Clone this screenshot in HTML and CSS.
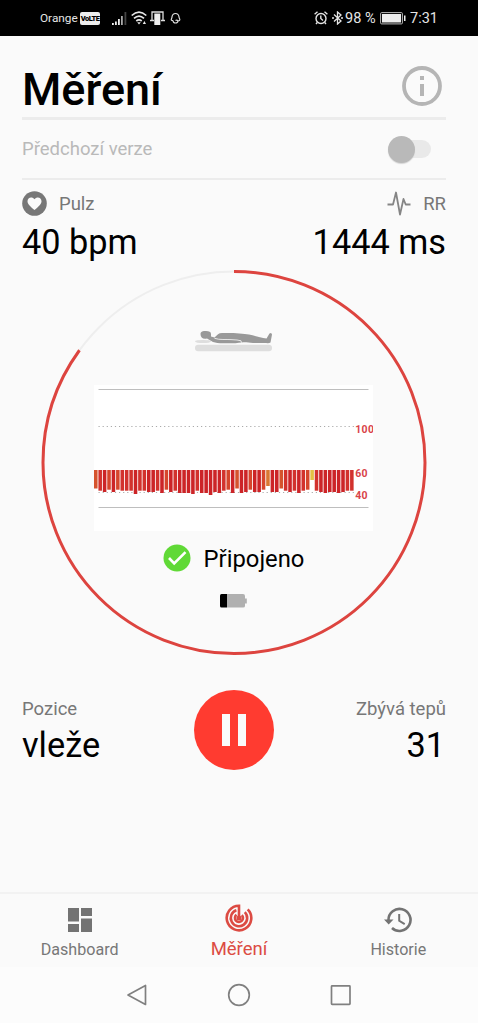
FILE: index.html
```html
<!DOCTYPE html>
<html lang="cs">
<head>
<meta charset="utf-8">
<title>Měření</title>
<link rel="stylesheet" href="styles.css">
</head>
<body>
<div class="statusbar">
  <span class="carrier">Orange</span>
  <span class="volte">VoLTE</span>
  <svg class="signal" width="15" height="13" viewBox="0 0 15 13"><path fill="#eee" d="M0 11h1.800v2H0zM3 9.500h1.800v3.500H3zM6 7h1.800v6H6z"/><path fill="#aaa" d="M9 4h1.800v9H9z"/><path fill="#444" d="M12.500 0h1.800v13h-1.800z"/></svg>
  <svg class="wifi" width="17" height="14" viewBox="0 0 17 14"><g fill="none" stroke="#e8e8e8" stroke-width="1.700"><path d="M.7 4.500Q8 -2.300 15.300 4.500M3 7.400Q8 2.800 13 7.400M5.300 10Q8 7.700 10.700 10"/></g><path fill="#e8e8e8" d="M6.200 11.200h3.600L8 13.500zM11.800 13l1.600-3 1.600 3z"/></svg>
  <svg class="cast" width="15" height="14" viewBox="0 0 15 14"><path d="M2 9V1h11v8M0 9.500h4M11 9.500h4" fill="none" stroke="#ddd" stroke-width="1.300"/><path fill="#eee" d="M4.300 2.500h6v11.500h-6z"/></svg>
  <svg class="bell" width="11" height="12" viewBox="0 0 11 12"><path d="M3 8.500Q.5 8.500 1.500 6.700Q2 6 2 4.800Q2.500 1.500 5.500 1.500T9 4.800Q9 6 9.700 7Q10.300 8.800 8 8.800M3 8.500q0 2.500 2.500 2.500T8 8.800Q7 7.500 5.500 8.500" fill="none" stroke="#ddd" stroke-width="1.200"/></svg>
  <span class="fill"></span>
  <svg class="alarm" width="14" height="14" viewBox="0 0 14 14"><g fill="none" stroke="#e5e5e5" stroke-width="1.400"><circle cx="7" cy="7.500" r="5"/><path d="M6.800 4.500v3l2.200 2M.6 3.200 3.500.8M13.400 3.200 10.500.8M3.300 11.500l-1.300 1.500M10.700 11.500l1.300 1.500"/></g></svg>
  <svg class="bt" width="11" height="14" viewBox="0 0 11 14"><path d="M2 3.500l7 6.500-3.500 3V1L9 4 2 10.500" fill="none" stroke="#e5e5e5" stroke-width="1.300"/><path d="M0 6.200h2v1.600H0zM9 6.200h2v1.600H9z" fill="#e5e5e5"/></svg>
  <span class="pct">98 %</span>
  <svg class="batt" width="26" height="13" viewBox="0 0 26 13"><rect x=".6" y=".6" width="21.800" height="11.300" rx="1" fill="none" stroke="#bbb"/><path fill="#eee" d="M2 2h19v8.500H2zM24 3.500h1.500v5.500H24z"/></svg>
  <span class="clock">7:31</span>
</div>

<main class="content">
  <header class="header">
    <h1 class="title">Měření</h1>
    <svg class="info" width="40" height="40" viewBox="0 0 40 40"><circle cx="20" cy="20" r="18" fill="none" stroke="#b5b5b5" stroke-width="3.800"/><path fill="#b5b5b5" d="M18 10h4v4h-4zM18 18h4v12h-4z"/></svg>
  </header>
  <div class="option">
    <span>Předchozí verze</span>
    <span class="switch"><span class="knob"></span></span>
  </div>

  <div class="metrics">
    <div class="metric">
      <div class="label"><svg width="25" height="25" viewBox="0 0 25 25"><circle cx="12.500" cy="12.500" r="12.300" fill="#777"/><path fill="#fafafa" d="M12.500 19C8 15 5.500 13 5.500 10.200c0-4 4.800-5 7-1.900 2.200-3.100 7-2.100 7 1.900 0 2.800-2.500 4.800-7 8.800z"/></svg><span>Pulz</span></div>
      <div class="value">40 bpm</div>
    </div>
    <div class="metric right">
      <div class="label"><svg width="24" height="25" viewBox="0 0 24 25"><path d="M.5 13.500H6L9 1.500l4 22 3.500-15.500 2.200 5.500h4.800" fill="none" stroke="#858585" stroke-width="1.800" stroke-linejoin="round"/></svg><span>RR</span></div>
      <div class="value">1444 ms</div>
    </div>
  </div>

  <section class="dial">
    <svg class="ring" width="386" height="386" viewBox="0 0 386 386"><circle class="track" cx="193" cy="192.500" r="191"/><circle class="progress" cx="193" cy="192.500" r="191" pathLength="100" stroke-dasharray="85 15" transform="rotate(-90 193 192.500)"/></svg>
    <div class="dial-body">
      <svg class="person" width="78" height="22" viewBox="0 0 78 22"><rect y="14.800" width="77" height="6.400" rx="3.200" fill="#dedede"/><ellipse cx="8" cy="11.500" rx="8" ry="1.600" fill="#dedede"/><path fill="#999" d="M5.500 4C5.500 1.500 8 1 11 1s5 .8 5 3v2.500l3.500 1L23 4.200Q24.500 3 27 3C36 2.600 48 3.300 54 4.500c6 1.300 11 3 17.500 4l3-5Q76.500 2 77 4.500L75.500 12.500Q74 13.500 71 13H58c-4 0-7-1-11-.6-6 .7-11 1.200-17 .8-5 .1-9-.1-12-1.200L12 8.500C8 9.200 5.500 8 5.500 4z"/><path d="M19.500 8.300C25 10.200 31 9.200 36 9.600q7 .2 10 1.200l.5 2" fill="none" stroke="#fafafa" stroke-width=".8"/></svg>
      <svg class="chart" id="chart" width="279" height="146" viewBox="0 0 279 146">
        <rect width="279" height="146" fill="#fff"/>
        <path d="M4.500 4.500h270M4.500 122.500h270" stroke="#bebebe" fill="none"/>
        <path d="M4.500 41.500h257M4.500 107.500h257" stroke="#aaa" stroke-dasharray="1.200 2.900" fill="none"/>
        <g id="bars"></g>
        <g class="axis"><text x="261.300" y="48">100</text><text x="261.300" y="91.500">60</text><text x="261.300" y="113.500">40</text></g>
      </svg>
      <div class="connection"><svg width="28" height="28" viewBox="0 0 28 28"><circle cx="14" cy="14" r="13.500" fill="#60d936"/><path d="M6 14l5.200 5.500L22.500 8.200" fill="none" stroke="#fff" stroke-width="2.600"/></svg><span>Připojeno</span></div>
      <svg class="sensor" width="27" height="14" viewBox="0 0 27 14"><path fill="#b0b0b0" d="M7 0h16q2 0 2 2v2.500h1.800v5H25V12q0 1.500-2 1.500H7z"/><path d="M7 0v13.500H1.500Q0 13.500 0 12V1.500Q0 0 1.500 0z"/></svg>
    </div>
  </section>

  <section class="controls">
    <div class="side"><div class="caption">Pozice</div><div class="value">vleže</div></div>
    <div class="pause"><span></span><span></span></div>
    <div class="side right"><div class="caption">Zbývá tepů</div><div class="value remaining">31</div></div>
  </section>
</main>

<nav class="tabs">
  <div class="tab"><svg width="26" height="26" viewBox="0 0 26 26"><path fill="#737373" d="M1 1h11v13.500H1zM14 1h11v8H14zM1 17h11v8H1zM14 11.500h11V25H14z"/></svg><span>Dashboard</span></div>
  <div class="tab active"><svg width="28" height="28" viewBox="0 0 28 28"><g fill="none" stroke="#dc4b43" stroke-width="2.600"><path d="M14 14V1.700a12.300 12.300 0 1 0 8.700 3.600"/><path d="M11.400 6.200a8.200 8.200 0 1 0 8.400 2"/><path d="M11.500 10.800a4 4 0 1 0 5.300.3"/></g><circle cx="14" cy="14" r="2.500" fill="#dc4b43"/></svg><span>Měření</span></div>
  <div class="tab"><svg width="28" height="26" viewBox="0 0 28 26"><path d="M4.500 13A11 11 0 1 1 8 21" fill="none" stroke="#737373" stroke-width="2.600"/><path fill="#737373" d="M0 12.500h9.500L4.700 17.500zM14.200 7h2v6.200l5 3-1 1.700-6-3.600z"/></svg><span>Historie</span></div>
</nav>
<div class="softkeys">
  <svg width="22" height="24" viewBox="0 0 22 24"><path d="M19.500 2.500v19L2 12z"/></svg>
  <svg width="24" height="24" viewBox="0 0 24 24"><circle cx="12" cy="12" r="10.300"/></svg>
  <svg width="22" height="24" viewBox="0 0 22 24"><rect x="1.500" y="2.800" width="18.500" height="18.500" rx=".6"/></svg>
</div>
<script src="app.js"></script>
</body>
</html>
```
FILE: styles.css
```css
* { box-sizing: border-box; }
body { margin: 0; width: 478px; height: 1023px; overflow: hidden; background: #fafafa; color: #000; font-family: Roboto, sans-serif; display: flex; flex-direction: column; }
svg { display: block; flex: none; }
.statusbar { height: 36px; flex: none; background: #000; color: #e5e5e5; display: flex; align-items: center; padding: 0 40px; font-size: 11.8px; white-space: nowrap; }
.carrier { width: 40px; }
.volte { width: 20px; height: 13px; background: #eee; color: #000; border-radius: 2px; font-size: 7.5px; line-height: 13px; font-weight: 900; text-align: center; letter-spacing: -.5px; }
.signal { margin-left: 12px; }
.wifi { margin-left: 4px; }
.cast { margin-left: 2px; }
.bell { margin-left: 5px; }
.fill { flex: 1; }
.bt { margin-left: 4px; }
.pct { font-size: 14.5px; margin-left: 2px; width: 35px; }
.clock { font-size: 14.5px; margin-left: 4px; width: 28px; }
.content { flex: 1; padding: 0 32px 0 22px; }
.header { height: 84px; padding-top: 15px; display: flex; justify-content: space-between; border-bottom: 3px solid #ececec; }
.title { margin: 0; padding-top: 7px; font-size: 45px; line-height: 64px; font-weight: 500; height: 64px; }
.info { margin: 15px 4px 0 0; }
.option { height: 60px; display: flex; align-items: center; justify-content: space-between; border-bottom: 2px solid #ececec; color: #b9b9b9; font-size: 18.5px; }
.switch { width: 40px; height: 18px; margin-right: 15px; border-radius: 9px; background: #e9e9e9; display: flex; align-items: center; }
.knob { width: 27px; height: 27px; margin-left: -3px; border-radius: 50%; background: #b9b9b9; box-shadow: 0 1px 1px #d5d5d5; }
.metrics { display: flex; justify-content: space-between; padding-top: 11px; height: 90px; }
.label { height: 25px; display: flex; align-items: center; gap: 12px; color: #777; font-size: 18.5px; }
.right { text-align: right; }
.right .label { justify-content: flex-end; }
.value { font-size: 34.3px; line-height: 40px; margin-top: 6px; }
.dial { display: grid; margin-left: 18.500px; width: 386px; height: 386px; }
.ring, .dial-body { grid-area: 1 / 1; }
.ring circle { fill: none; }
.track { stroke: #eeeeee; stroke-width: 2; }
.progress { stroke: #dd443f; stroke-width: 3; }
.dial-body { display: flex; flex-direction: column; align-items: center; padding-top: 60px; }
.chart { margin-top: 33px; }
.axis { font: 700 10.500px Roboto, sans-serif; fill: #d9444a; }
.connection { display: flex; align-items: center; gap: 13px; height: 28px; margin-top: 13px; font-size: 23.8px; }
.connection span { padding-top: 2px; }
.sensor { margin-top: 22px; }
.controls { display: grid; grid-template-columns: 1fr 80px 1fr; margin-top: 34px; }
.caption { color: #777; font-size: 18.5px; line-height: 22px; padding-top: 8px; }
.controls .value { margin-top: 5px; }
.remaining { padding-right: 1px; }
.pause { width: 80px; height: 80px; border-radius: 50%; background: #ff3b30; display: flex; align-items: center; justify-content: center; gap: 8px; }
.pause span { width: 8px; height: 32px; background: #fafafa; }
.tabs { height: 75px; flex: none; border-top: 2px solid #f2f2f2; display: flex; }
.tab { flex: 1; display: flex; flex-direction: column; align-items: center; color: #777; font-size: 16.1px; padding-top: 13px; }
.tab span { line-height: 20px; margin-top: 7px; }
.tab.active { color: #dc4b43; font-size: 18.5px; padding-top: 10px; }
.tab.active span { margin-top: 6px; line-height: 22px; }
.softkeys { height: 56px; flex: none; background: #fcfcfc; display: flex; justify-content: center; gap: 79px; padding-top: 16px; }
.softkeys svg { fill: none; stroke: #808080; stroke-width: 1.7; stroke-linejoin: round; }
.axis text { letter-spacing: .3px; }
```
FILE: app.js
```js
// Heart-rate samples as bar lengths below the 60 bpm line.
const lengths = [18.5,20.7,22,19.7,22,19.7,20.7,20.7,20.7,24,20.7,20.7,22,22,20.7,23,19.7,22,20.7,23,23,23,24,20.7,23,23,25,22,23,20.7,19.7,23,18.5,23,22,19.7,22,22,19.7,16,22,22,18.5,20.7,22,20.7,23,20.7,19.7,10,20.7,22,23,22,22,23,22,20.7,20.7];
const color = n => n < 12 ? "#e3c143" : n < 17 ? "#d97832" : n < 19 ? "#d5532d" : n < 20 ? "#d6462d" : n < 21 ? "#d2322d" : "#cc2427";
const group = document.getElementById("bars");
lengths.forEach((n, i) => {
  const r = document.createElementNS("http://www.w3.org/2000/svg", "rect");
  r.setAttribute("x", i * 4.415);
  r.setAttribute("y", 85);
  r.setAttribute("width", 3.55);
  r.setAttribute("height", n);
  r.setAttribute("fill", color(n));
  group.append(r);
});
```
